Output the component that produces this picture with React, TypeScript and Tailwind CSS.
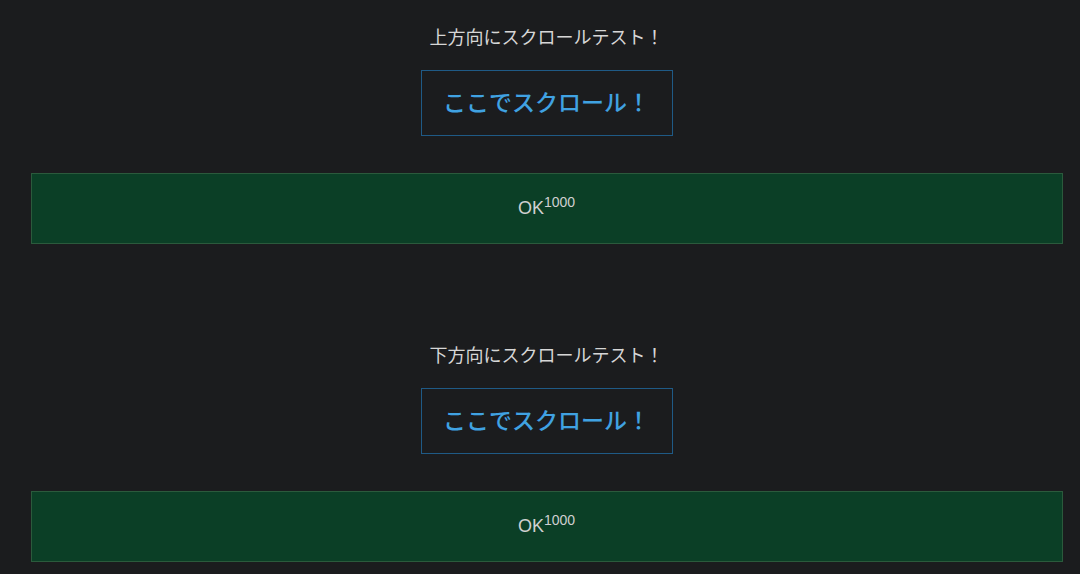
import React from 'react';

const jp = "font-['Meiryo','Noto_Sans_CJK_JP',sans-serif]";

function ScrollSection({ title }: { title: string }) {
  return (
    <section className="flex flex-col items-center">
      {/* heading */}
      <p className={`${jp} pt-6 text-[18px] leading-6 text-[#d6d6d6]`}>{title}</p>

      {/* scroll target */}
      <div className="mt-[22px] flex h-[66px] w-[252px] items-center justify-center border border-[#1f5a86] pb-[3px]">
        <span className={`${jp} text-[23px] font-medium text-[#40a2e2]`}>ここでスクロール！</span>
      </div>

      {/* result */}
      <div className="mt-[37px] flex h-[71px] w-[1032px] items-center justify-center border border-[#2b5a3c] bg-[#0b3f26]">
        <span className="font-['Liberation_Sans',Arial,sans-serif] text-[18px] text-[#d0d0d0]">
          OK<sup className="text-[14px]">1000</sup>
        </span>
      </div>
    </section>
  );
}

export default function App() {
  return (
    <main className="min-h-screen bg-[#1b1c1e] pl-[13px]">
      <div className="space-y-[74px]">
        <ScrollSection title="上方向にスクロールテスト！" />
        <ScrollSection title="下方向にスクロールテスト！" />
      </div>
    </main>
  );
}
